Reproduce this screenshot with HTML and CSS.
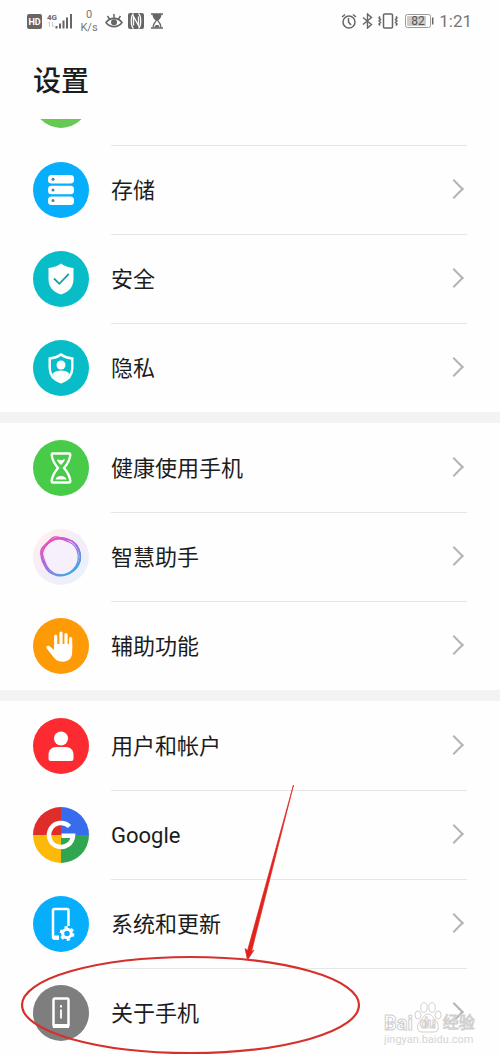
FILE: index.html
```html
<!DOCTYPE html>
<html lang="zh-CN">
<head>
    <meta charset="UTF-8">
    <meta name="viewport" content="width=device-width, initial-scale=1.0">
    <title>设置</title>
    <link rel="stylesheet" href="styles.css">
</head>
<body>
    <div class="status-bar">
        <div class="status-left">
            <svg width="15" height="15" viewBox="0 0 15 15">
                <rect width="15" height="15" rx="2" fill="#666"/>
                <text x="7.5" y="11" text-anchor="middle" class="hd-text">HD</text>
            </svg>
            <svg class="signal" width="26" height="18" viewBox="0 0 26 18">
                <text x="0" y="8" class="net-text">4G</text>
                <path d="M2.500 10v5M1 11.500l1.500-1.500M5.500 15v-5M7 13.500l-1.500 1.500" stroke="#ccc" fill="none"/>
                <path d="M9.500 16.500v-2.500M13 16.500v-5M16.500 16.500v-8M20 16.500v-11M24 16.500V2" stroke="#666" stroke-width="2"/>
            </svg>
            <div class="speed"><span>0</span><span>K/s</span></div>
            <svg width="18" height="16" viewBox="0 0 18 16">
                <path d="M1 9.500C5 4 13 4 17 9.500C13 15 5 15 1 9.500Z" fill="none" stroke="#666" stroke-width="1.600"/>
                <circle cx="9" cy="9.300" r="3" fill="#666"/>
                <path d="M9 5V1M4.500 6L2.500 3M13.500 6l2-3" stroke="#666" stroke-width="1.500"/>
            </svg>
            <svg class="nfc" width="16" height="16" viewBox="0 0 16 16">
                <rect width="16" height="16" rx="2" fill="#666"/>
                <path d="M5.500 0.500C3.500 2 3.300 4 3.300 8s.2 6 2.200 7.500M5.500 12.500V3.500l5 9V3.500M10.500 .5c2 1.500 2.200 3.500 2.200 7.500s-.2 6-2.200 7.500" fill="none" stroke="#fff" stroke-width="1.300"/>
            </svg>
            <svg class="timer" width="12" height="16" viewBox="0 0 12 16">
                <path d="M0 1h12M0 15h12" stroke="#666" stroke-width="1.600"/>
                <path d="M1.500 1h9c0 4-2 5-3.500 7h-2C3.500 6 1.500 5 1.500 1Z" fill="#666"/>
                <path d="M5 8c-2 2-3 3-3 6.500M7 8c2 2 3 3 3 6.500" fill="none" stroke="#666" stroke-width="1.200"/>
                <path d="M3.500 14.500c0-2 1.500-2.500 2.500-2.500s2.500.5 2.500 2.500Z" fill="#666"/>
            </svg>
        </div>
        <div class="status-right">
            <svg width="16" height="16" viewBox="0 0 16 16" fill="none" stroke="#666" stroke-width="1.500">
                <circle cx="8" cy="9" r="6"/>
                <path d="M7.500 5v4l2.500 3M1 4l3-2.500M15 4l-3-2.500"/>
            </svg>
            <svg width="11" height="16" viewBox="0 0 11 16" fill="none" stroke="#666" stroke-width="1.400">
                <path d="M1 4.500l8.500 7L5.500 15V1l4 3.500L1 11.500"/>
            </svg>
            <svg width="20" height="16" viewBox="0 0 20 16" fill="none" stroke="#666" stroke-width="1.500">
                <rect x="5.500" y="1" width="9" height="14" rx="1"/>
                <path d="M2 3.500l-1 1.500 1.500 1.500L1 8l1.500 1.500L1 11l1 1.500M18 3.500l1 1.500-1.500 1.500L19 8l-1.500 1.500L19 11l-1 1.500"/>
            </svg>
            <svg class="battery" width="29" height="14" viewBox="0 0 29 14">
                <rect x=".5" y=".5" width="25" height="13" rx="2" fill="#fff" stroke="#999"/>
                <rect x="2" y="2" width="19" height="10" fill="#ccc"/>
                <path d="M27.700 3.500v7" stroke="#666" stroke-width="1.500"/>
                <text x="13" y="11" text-anchor="middle" class="battery-text">82</text>
            </svg>
            <span class="clock">1:21</span>
        </div>
    </div>

    <h1>设置</h1>

    <div class="scrolled-row"><span class="circle green-light"></span></div>

    <main>
        <section class="group first">
            <a href="#" class="row">
                <svg class="icon" viewBox="0 0 56 56">
                    <circle cx="28" cy="28" r="28" fill="#06aefc"/>
                    <g fill="#fff">
                        <rect x="15" y="13" width="26" height="8.500" rx="3.500"/>
                        <rect x="15" y="23.700" width="26" height="8.500" rx="3.500"/>
                        <rect x="15" y="34.400" width="26" height="8.500" rx="3.500"/>
                    </g>
                    <g fill="#4582a8">
                        <circle cx="20" cy="17.300" r="1.500"/>
                        <circle cx="20" cy="28" r="1.500"/>
                        <circle cx="20" cy="38.600" r="1.500"/>
                    </g>
                </svg>
                <span class="label">存储</span>
            </a>
            <a href="#" class="row">
                <svg class="icon" viewBox="0 0 56 56">
                    <circle cx="28" cy="28" r="28" fill="#08bdc7"/>
                    <path d="M28 12.500c3 2.500 8 4 12.500 4.500v11c0 8-5 13.500-12.500 15.500C20.500 41.500 15.500 36 15.500 28V17C20 16.500 25 15 28 12.500Z" fill="#fff"/>
                    <path d="M21 27.500l5.300 5.300 9.500-10" fill="none" stroke="#189fa5" stroke-width="1.800"/>
                </svg>
                <span class="label">安全</span>
            </a>
            <a href="#" class="row">
                <svg class="icon" viewBox="0 0 56 56">
                    <circle cx="28" cy="28" r="28" fill="#08bdc7"/>
                    <path d="M28 14.500c3 2.200 7.500 3.700 11.300 4v9.500c0 7.500-4.500 12-11.300 14.300C21.200 40 16.700 35.500 16.700 28v-9.500C20.500 18.200 25 16.700 28 14.500Z" fill="none" stroke="#fff" stroke-width="2.400"/>
                    <circle cx="28" cy="25" r="4.500" fill="#fff"/>
                    <path d="M19.500 34c2-3 5-3.500 8.500-3.500s6.500.5 8.500 3.500c-2 4.500-5 6.500-8.500 7.800-3.500-1.300-6.500-3.300-8.500-7.800Z" fill="#fff"/>
                </svg>
                <span class="label">隐私</span>
            </a>
        </section>

        <section class="group">
            <a href="#" class="row">
                <svg class="icon" viewBox="0 0 56 56">
                    <circle cx="28" cy="28" r="28" fill="#48cb48"/>
                    <path d="M20 13.500h16q1.500 0 1.300 1.500C36.700 21 34 24.500 31 28c3 3.500 5.700 7 6.300 13q.2 1.500-1.300 1.500H20q-1.500 0-1.300-1.500C19.300 35 22 31.500 25 28c-3-3.500-5.700-7-6.300-13q-.2-1.500 1.300-1.500Z" fill="none" stroke="#fff" stroke-width="2.400"/>
                    <path d="M24 20c2-1.500 3 .8 4.500.3S31 18.800 32 19.500c-.7 2.300-2 3.500-4 5.500-2-1.700-3.300-3-4-5ZM22.500 39.500c.5-2.300 2.500-3.500 5.500-3.500s5 1.200 5.500 3.500Z" fill="#fff"/>
                </svg>
                <span class="label">健康使用手机</span>
            </a>
            <a href="#" class="row">
                <svg class="icon" viewBox="0 0 56 56">
                    <defs>
                        <linearGradient id="orb" x1="0" y1="0" x2=".9" y2="1">
                            <stop offset="0" stop-color="#fff3ea"/>
                            <stop offset=".5" stop-color="#f5ecf9"/>
                            <stop offset="1" stop-color="#e8f3fc"/>
                        </linearGradient>
                        <linearGradient id="ring" x1=".2" y1=".1" x2=".8" y2=".9">
                            <stop offset="0" stop-color="#e84cc4"/>
                            <stop offset=".5" stop-color="#9a70e0"/>
                            <stop offset="1" stop-color="#45a5e6"/>
                        </linearGradient>
                    </defs>
                    <circle cx="28" cy="28" r="28" fill="url(#orb)"/>
                    <circle cx="28" cy="28" r="16" fill="#f6f0fc"/>
                    <g fill="none" stroke="url(#ring)" stroke-width="1.200">
                        <path d="M19 9c4-3 8 0 13 1s9 2 12 8 4 13 2 17-7 9-13 11-13 1-17-4-5-9-7-14-2-8 2-11 5-6 8-8Z"/>
                        <path d="M20 10c5-2 9-2 15 0s9 5 11 10 2 12-1 17-8 8-15 9-12-1-16-6-6-9-6-14 1-7 4-10 5-5 8-6Z"/>
                        <path d="M21 11c5-3 10 0 15 2s8 6 9 12 0 11-5 16-11 6-17 5-10-5-12-11-3-9 0-15 6-7 10-9Z"/>
                        <path d="M18 12c5-4 12-2 18-1s9 6 11 13-3 13-7 17-11 6-17 4-9-6-11-12-4-10-1-14 4-5 7-7Z"/>
                    </g>
                </svg>
                <span class="label">智慧助手</span>
            </a>
            <a href="#" class="row">
                <svg class="icon" viewBox="0 0 56 56">
                    <circle cx="28" cy="28" r="28" fill="#ff9a07"/>
                    <path d="M22.700 29V18M28 28V15M33 28V16.500M37.600 30V20.500" stroke="#fff" stroke-width="3.200" stroke-linecap="round"/>
                    <path d="M21.100 26h18.100v8c0 6.500-4 9.700-9.500 9.700-5 0-7.700-2.200-10-5.700l-6-7.500c-1.500-2 1-3.500 3-2.300l4.400 3.800Z" fill="#fff"/>
                </svg>
                <span class="label">辅助功能</span>
            </a>
        </section>

        <section class="group">
            <a href="#" class="row">
                <svg class="icon" viewBox="0 0 56 56">
                    <circle cx="28" cy="28" r="28" fill="#fb2b31"/>
                    <circle cx="28" cy="20.500" r="7" fill="#fff"/>
                    <path d="M15.500 37c0-5 3-8 8-8h9c5 0 8 3 8 8v3.500q0 2.500-2.500 2.500H18q-2.500 0-2.500-2.500Z" fill="#fff"/>
                </svg>
                <span class="label">用户和帐户</span>
            </a>
            <a href="#" class="row">
                <svg class="icon" viewBox="0 0 56 56">
                    <path d="M28 28V0A28 28 0 0 0 0 28Z" fill="#df2d2b"/>
                    <path d="M28 28h28A28 28 0 0 0 28 0Z" fill="#376cec"/>
                    <path d="M28 28H0a28 28 0 0 0 28 28Z" fill="#fcb908"/>
                    <path d="M28 28v28a28 28 0 0 0 28-28Z" fill="#30a650"/>
                    <path d="M36.500 19.500A12 12 0 1 0 40 28.800H28.500" fill="none" stroke="#fff" stroke-width="4.500"/>
                </svg>
                <span class="label">Google</span>
            </a>
            <a href="#" class="row">
                <svg class="icon" viewBox="0 0 56 56">
                    <circle cx="28" cy="28" r="28" fill="#06aefc"/>
                    <path d="M26 42.500h-4.500q-1.500 0-1.500-1.500V14.500q0-1.500 1.500-1.500H34q1.500 0 1.500 1.500V30" fill="none" stroke="#fff" stroke-width="2.500"/>
                    <path d="M20 39.500h6v4H20Z" fill="#fff"/>
                    <circle cx="34" cy="37.500" r="4.300" fill="none" stroke="#fff" stroke-width="3"/>
                    <circle cx="34" cy="37.500" r="6.300" fill="none" stroke="#fff" stroke-width="2.200" stroke-dasharray="3.300 3.300"/>
                </svg>
                <span class="label">系统和更新</span>
            </a>
            <a href="#" class="row about">
                <svg class="icon" viewBox="0 0 56 56">
                    <circle cx="28" cy="28" r="28" fill="#7e7e7e"/>
                    <rect x="20.500" y="13.500" width="15" height="28" rx="1.500" fill="none" stroke="#fff" stroke-width="2.500"/>
                    <path d="M20 39h16v4H20Z" fill="#fff"/>
                    <path d="M28 20v2.500M28 24.500v9" stroke="#fff" stroke-width="1.800"/>
                </svg>
                <span class="label">关于手机</span>
            </a>

            <!-- arrow and circle pointing at the last row -->
            <svg class="marker" width="350" height="280" viewBox="0 0 350 280">
                <path d="M273.500 8L231.500 174.500 234 173 227.500 183 225 171.500 227.500 173.500Z" fill="#e0241d" stroke="#e0241d" stroke-width=".7"/>
                <ellipse cx="170.500" cy="228" rx="168.500" ry="48" fill="none" stroke="#d5302b" stroke-width="2.200"/>
            </svg>

            <div class="watermark">
                <div class="wm-name"><span class="wm-bai">Bai</span><span class="wm-du"><svg class="paw" width="28" height="31" viewBox="0 0 28 31" fill="#fff" stroke="#d0d0d0">
                    <ellipse cx="4" cy="13" rx="3" ry="4"/>
                    <ellipse cx="10" cy="5.500" rx="3.200" ry="4.800"/>
                    <ellipse cx="18" cy="5.500" rx="3.200" ry="4.800"/>
                    <ellipse cx="24" cy="13" rx="3" ry="4"/>
                    <path d="M14 12c4 0 5 4 8 7s4 11-2 11H8c-6 0-5-8-2-11s4-7 8-7Z"/>
                </svg><span class="wm-du-text">du</span></span><span class="wm-cn">经验</span></div>
                <div class="wm-url">jingyan.baidu.com</div>
            </div>
        </section>
    </main>
</body>
</html>
```

FILE: styles.css
```css
* {
    box-sizing: border-box;
}
body {
    margin: 0;
    font-family: Roboto, "Noto Sans CJK SC", sans-serif;
    background: #fefefe;
    color: #1c1c1c;
}
svg {
    display: block;
    flex-shrink: 0;
}

/* status bar */
.status-bar {
    display: flex;
    justify-content: space-between;
    height: 42px;
    padding: 0 28px 0 27px;
    color: #777;
}
.status-left, .status-right {
    display: flex;
    align-items: center;
    gap: 5px;
}
.hd-text {
    font-size: 9px;
    font-weight: bold;
    fill: #fff;
}
.net-text {
    font-size: 8px;
    font-weight: bold;
    fill: #666;
}
.timer {
    margin-left: 2px;
}
.battery {
    margin-left: 2px;
}
.battery-text {
    font-size: 12px;
    fill: #555;
}
.speed {
    display: flex;
    flex-direction: column;
    align-items: center;
    width: 22px;
    font-size: 11px;
    line-height: 13px;
}
.clock {
    font-size: 17px;
    line-height: 20px;
}

h1 {
    margin: 0;
    padding: 20px 33px 0;
    height: 77px;
    font-size: 28px;
    font-weight: 500;
    line-height: 40px;
}

/* row that is scrolled under the title */
.scrolled-row {
    display: flex;
    align-items: flex-end;
    height: 26px;
    padding: 0 33px 17px;
    overflow: hidden;
}
.circle {
    width: 56px;
    height: 56px;
    border-radius: 50%;
}
.green-light {
    background: #67c853;
    clip-path: inset(47px 0 0 0);
}

/* list */
.group {
    position: relative;
}
.group + .group {
    border-top: 11px solid #f3f3f3;
}
.row {
    display: flex;
    align-items: center;
    gap: 22px;
    height: 89px;
    padding: 0 33px;
    color: inherit;
    text-decoration: none;
}
.icon {
    width: 56px;
    height: 56px;
}
.label {
    display: flex;
    flex: 1;
    align-items: center;
    justify-content: space-between;
    height: 100%;
    padding-top: 2px;
    font-size: 22px;
    line-height: 32px;
    border-top: 1px solid transparent;
}
.row + .row .label, .first .label {
    border-top-color: #e6e6e6;
}
.label::after {
    content: "";
    width: 12px;
    height: 12px;
    margin: 0 6px 4px 0;
    border-top: 2px solid #b3b3b3;
    border-right: 2px solid #b3b3b3;
    transform: rotate(45deg);
}

.marker {
    position: absolute;
    left: 20px;
    bottom: 0;
    pointer-events: none;
}

.watermark {
    position: absolute;
    right: 24px;
    bottom: 11px;
    width: 92px;
    pointer-events: none;
}
.wm-name {
    display: flex;
    align-items: center;
    gap: 1px;
    height: 20px;
    font-size: 20px;
    line-height: 20px;
    font-weight: bold;
    color: #fff;
    -webkit-text-stroke: 1px #d0d0d0;
}
.wm-du {
    position: relative;
    width: 28px;
    font-size: 14px;
    text-align: center;
}
.wm-du-text {
    position: relative;
}
.paw {
    position: absolute;
    left: 0;
    bottom: 0;
    -webkit-text-stroke: 0;
}
.wm-cn {
    font-size: 16px;
    font-weight: normal;
}
.wm-url {
    font-size: 11px;
    line-height: 13px;
    color: #d5d5d5;
}
```
